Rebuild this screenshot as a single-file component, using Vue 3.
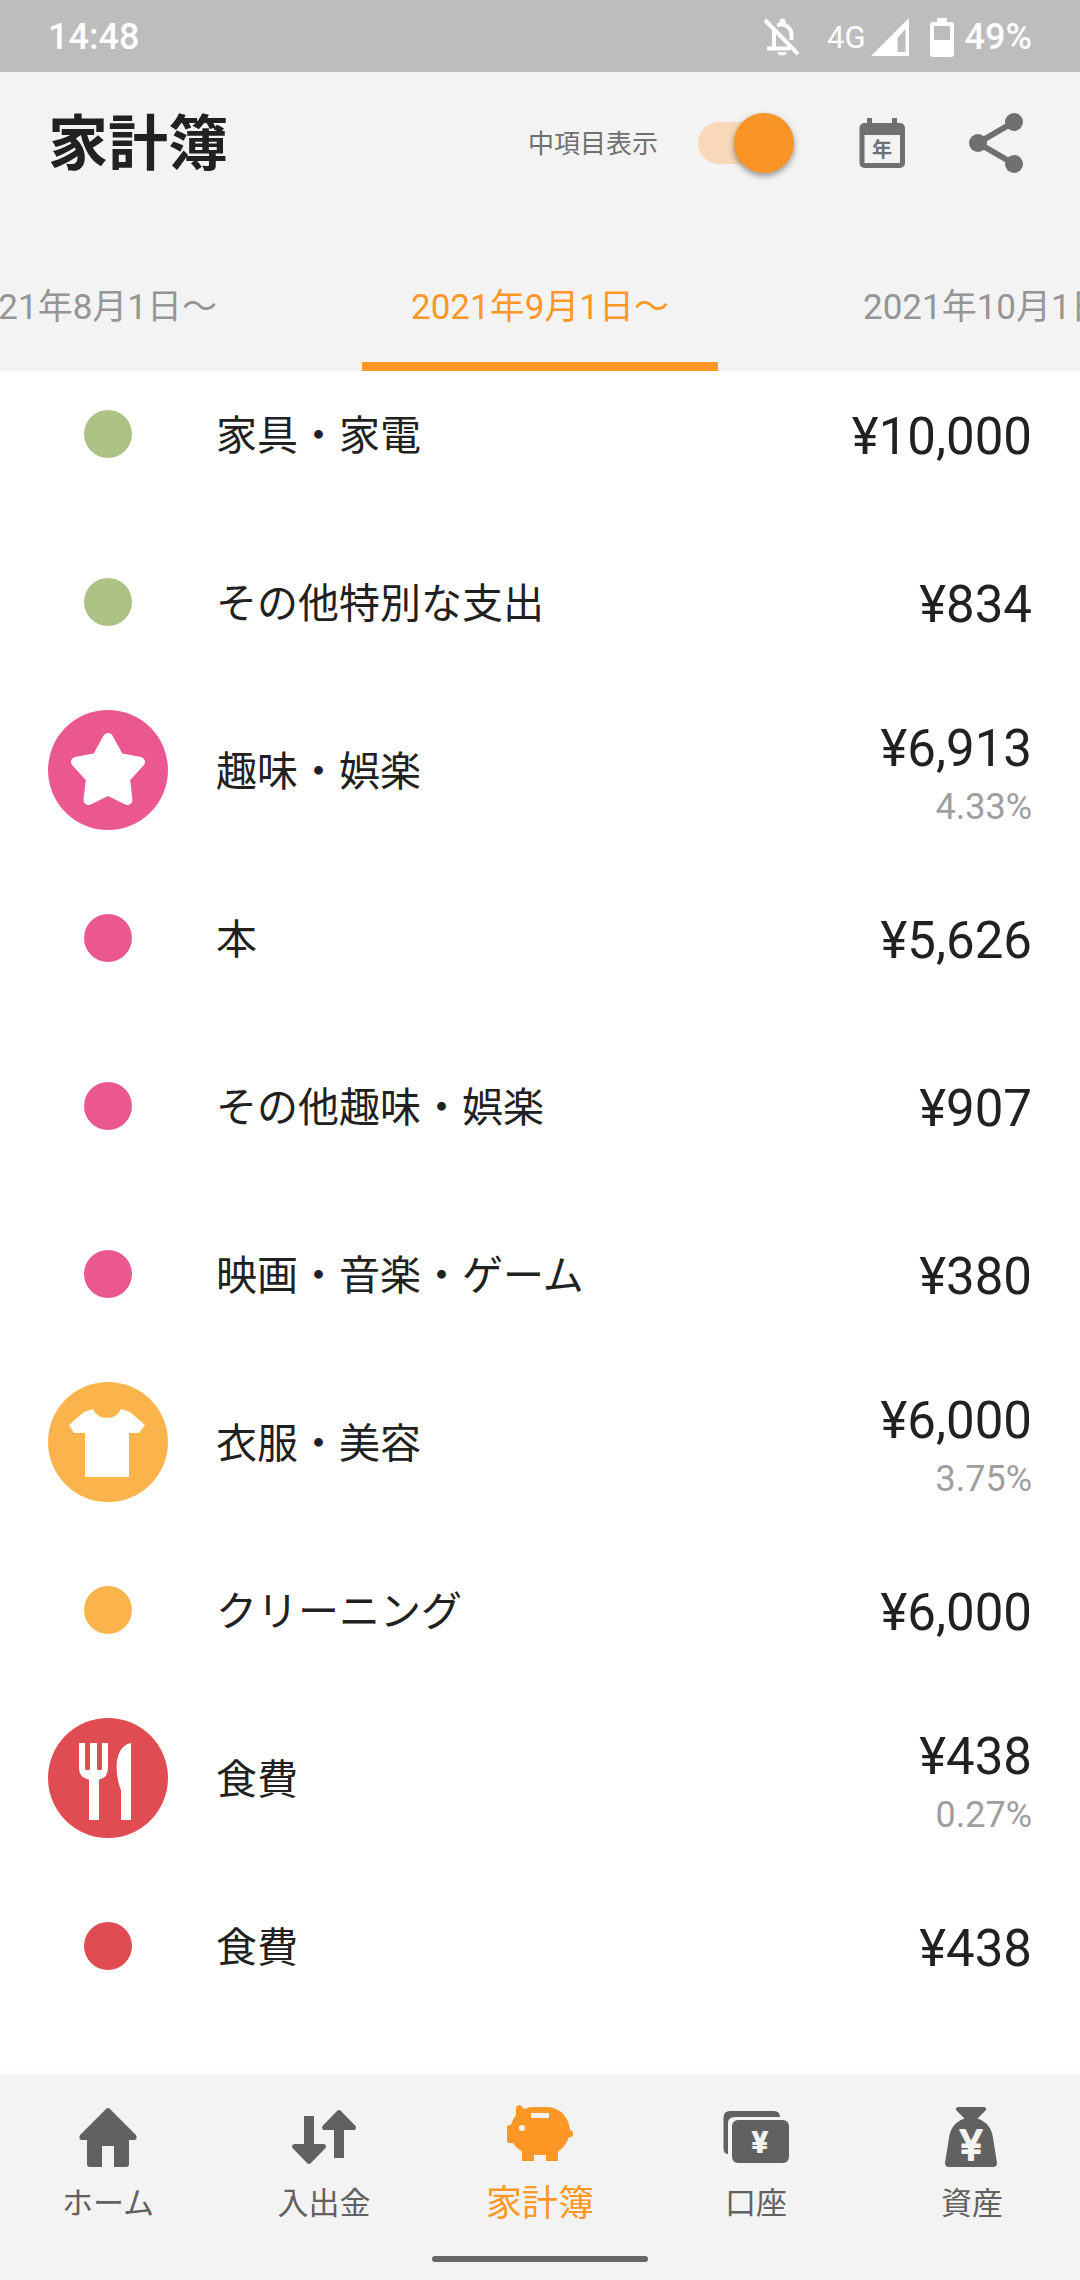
<script setup>
import { ref } from 'vue'

const showSubcategories = ref(true)

const periods = ['2021年8月1日〜', '2021年9月1日〜', '2021年10月1日〜']
const activePeriod = 1

const rows = [
  { label: '家具・家電', amount: '¥10,000', tone: 'green' },
  { label: 'その他特別な支出', amount: '¥834', tone: 'green' },
  { label: '趣味・娯楽', amount: '¥6,913', share: '4.33%', tone: 'pink', icon: 'star' },
  { label: '本', amount: '¥5,626', tone: 'pink' },
  { label: 'その他趣味・娯楽', amount: '¥907', tone: 'pink' },
  { label: '映画・音楽・ゲーム', amount: '¥380', tone: 'pink' },
  { label: '衣服・美容', amount: '¥6,000', share: '3.75%', tone: 'amber', icon: 'shirt' },
  { label: 'クリーニング', amount: '¥6,000', tone: 'amber' },
  { label: '食費', amount: '¥438', share: '0.27%', tone: 'red', icon: 'food' },
  { label: '食費', amount: '¥438', tone: 'red' },
]

const navItems = [
  { id: 'home', label: 'ホーム' },
  { id: 'flow', label: '入出金' },
  { id: 'book', label: '家計簿', active: true },
  { id: 'account', label: '口座' },
  { id: 'assets', label: '資産' },
]
</script>

<template>
  <div class="app">
    <div class="status">
      <span class="clock">14:48</span>
      <svg class="bell" viewBox="0 0 37 38" width="37" height="38" fill="none" stroke="#fff" stroke-width="4">
        <path d="M11 12V30M4 30.500H27" />
        <path d="M14 7.500C23 4 28.500 11 28.500 17V22" />
        <path d="M2 2L35 36" />
        <path d="M16.500 6V3.500a3 3 0 0 1 6 0V6zM14.500 34h9a4.500 3.500 0 0 1-9 0z" fill="#fff" stroke="none" />
      </svg>
      <span class="network">4G</span>
      <svg class="signal" viewBox="0 0 38 38" width="38" height="38">
        <path fill="#fff" fill-rule="evenodd" d="M38 0V38H0zM34.500 11L26.500 20V34H34.500z" />
      </svg>
      <svg class="battery" viewBox="0 0 24 39" width="24" height="39">
        <path fill="#fff" fill-rule="evenodd" d="M7 0h10v4h4a3 3 0 0 1 3 3v29a3 3 0 0 1-3 3H3a3 3 0 0 1-3-3V7a3 3 0 0 1 3-3h4zM4 8v14h16V8z" />
      </svg>
      <span class="level">49%</span>
    </div>

    <header class="header">
      <div class="toolbar">
        <h1 class="title">家計簿</h1>
        <label class="toggle">
          <span class="toggle-text">中項目表示</span>
          <input v-model="showSubcategories" type="checkbox" role="switch" class="switch" />
        </label>
        <button type="button" class="tool calendar" aria-label="年表示">
          <svg viewBox="0 0 72 72" width="72" height="72">
            <path fill="#707070" fill-rule="evenodd" d="M21 11h5v5h20v-5h5v5h3a5 5 0 0 1 5 5v35a5 5 0 0 1-5 5H18.500a5 5 0 0 1-5-5V21a5 5 0 0 1 5-5H21zM18.500 28v28h35.500V28z" />
            <text x="36" y="50" text-anchor="middle" class="year">年</text>
          </svg>
        </button>
        <button type="button" class="tool share" aria-label="共有">
          <svg viewBox="0 0 72 72" width="72" height="72" fill="#707070">
            <path d="M54 15L18 36L54 57" fill="none" stroke="#707070" stroke-width="6" />
            <circle cx="54" cy="15" r="9" />
            <circle cx="18" cy="36" r="9" />
            <circle cx="54" cy="57" r="9" />
          </svg>
        </button>
      </div>
      <nav class="tabs">
        <button
          v-for="(period, i) in periods"
          :key="period"
          type="button"
          class="tab"
          :class="{ active: i === activePeriod }"
        >{{ period }}</button>
      </nav>
    </header>

    <main class="content">
      <ul class="rows">
        <li v-for="(row, i) in rows" :key="i" class="row">
          <div class="marker">
            <span v-if="!row.icon" class="dot" :class="row.tone"></span>
            <span v-else class="badge" :class="row.tone">
              <svg viewBox="0 0 120 120" width="120" height="120" fill="#fff">
                <path
                  v-if="row.icon === 'star'"
                  d="M60 28L71 48L92 52L77 68.500L79.500 90L60 80.500L40.500 90L43 68.500L28 52L49 48z"
                  stroke="#fff"
                  stroke-width="10"
                  stroke-linejoin="round"
                />
                <path
                  v-else-if="row.icon === 'shirt'"
                  d="M45 27C50 39 68 39 73 27L82 30L97 43L91 51H81V95H37V51H26L21 43L36 30z"
                />
                <template v-else>
                  <path d="M31 25h6v26a3 3 0 0 0 5 0V25h7v26a3 3 0 0 0 5 0V25h6v25q0 10-9 11.500V102H41V61.500Q31 60 31 50z" />
                  <path d="M83 25V102H73V72C66 55 66 28 83 25z" />
                </template>
              </svg>
            </span>
          </div>
          <span class="label">{{ row.label }}</span>
          <div class="figures">
            <span class="amount">{{ row.amount }}</span>
            <span v-if="row.share" class="percent">{{ row.share }}</span>
          </div>
        </li>
      </ul>
    </main>

    <footer class="bottom">
      <nav class="nav">
        <a v-for="item in navItems" :key="item.id" href="#" class="nav-item" :class="{ active: item.active }">
          <svg viewBox="0 0 72 72" width="72" height="72" fill="currentColor">
            <path
              v-if="item.id === 'home'"
              d="M34 9q2-2 4 0L64 35q2 5-2 5H57V64q0 3-3 3H42V46H30V67H18q-3 0-3-3V40H10q-4 0-2-5z"
            />
            <path
              v-else-if="item.id === 'flow'"
              d="M16 16H26V44H36q3 1 1.500 4L23 63q-2 2-4 0L4.500 48Q3 45 6 44H16zM46 58V30H36q-3-1-1.500-4L49 11q2-2 4 0L67.500 26Q69 29 66 30H56V58z"
            />
            <path
              v-else-if="item.id === 'book'"
              fill-rule="evenodd"
              d="M12 8q1-4 5-2.500L20 9Q24 7 30 7H42C57 7 65 18 66 30q3 0 3 4t-4 3Q62 46 54 51.500V61H42V55H30V61H18V51.500Q12 48 9 43H5q-2 0-2-2V27q0-2 4-2 1-5 5-10zM27 13v5h18v-5zM21 28a3 3 0 1 0-6 0a3 3 0 0 0 6 0z"
            />
            <template v-else-if="item.id === 'account'">
              <path d="M10 11H54q6 0 6 6H15Q8 17 8 23V54Q3.500 54 3.500 48V18q0-7 6.500-7z" />
              <rect x="12" y="20" width="57" height="43" rx="6" />
              <text x="40" y="53" text-anchor="middle" class="yen">¥</text>
            </template>
            <template v-else>
              <path d="M22 7H48q3 1 2 3L41.500 18.500C52 22 56 30 57 38L61 63q0 4-4 4H13q-4 0-4-4L13 38C14 30 18 22 28.500 18.500L20 10q-1-2 2-3z" />
              <text x="35" y="60" text-anchor="middle" class="yen round">¥</text>
            </template>
          </svg>
          <span>{{ item.label }}</span>
        </a>
      </nav>
      <div class="handle"></div>
    </footer>
  </div>
</template>

<style>
body {
  margin: 0;
  background: #fff;
}
</style>

<style scoped>
.app {
  display: flex;
  flex-direction: column;
  min-height: 100vh;
  overflow: hidden;
  background: #fff;
  color: #212121;
  font-family: Roboto, "Noto Sans CJK JP", sans-serif;
}

.app button {
  padding: 0;
  border: 0;
  background: none;
  font: inherit;
}

.status {
  box-sizing: border-box;
  display: flex;
  align-items: center;
  height: 72px;
  padding: 2px 48px 0;
  background: #bdbdbd;
  color: #fff;
  font-size: 36px;
  font-weight: 500;
}

.clock {
  margin-right: auto;
}

.network {
  margin: 0 5px 0 27px;
  font-size: 31px;
  font-weight: 400;
}

.battery {
  margin: 0 11px 0 21px;
}

.header {
  background: #f3f3f3;
}

.toolbar {
  display: flex;
  align-items: center;
  height: 142px;
  padding: 0 48px;
}

.title {
  margin: 0 auto 0 0;
  padding-top: 4px;
  font-size: 60px;
  line-height: 72px;
  font-weight: 700;
}

.toggle {
  display: flex;
  align-items: center;
  gap: 40px;
  color: #707070;
  font-size: 26px;
}

.toggle-text {
  padding-bottom: 4px;
}

.switch {
  appearance: none;
  position: relative;
  display: flex;
  align-items: center;
  width: 96px;
  height: 60px;
  margin: 0;
}

.switch::before {
  content: "";
  width: 84px;
  height: 42px;
  border-radius: 21px;
  background: #f8d8b8;
}

.switch::after {
  content: "";
  position: absolute;
  left: 0;
  top: 0;
  width: 60px;
  height: 60px;
  border-radius: 50%;
  background: #bdbdbd;
  box-shadow: 0 3px 6px rgba(0, 0, 0, 0.4);
}

.switch:checked::after {
  left: 36px;
  background: #f99426;
}

.tool svg {
  display: block;
}

.calendar {
  margin: 0 42px 0 52px;
}

.year {
  fill: #707070;
  font-size: 20px;
  font-weight: 700;
}

.tabs {
  display: grid;
  grid-template-columns: minmax(0, 1fr) auto minmax(0, 1fr);
  column-gap: 96px;
  height: 130px;
  margin-top: 27px;
  overflow: hidden;
}

.app .tab {
  box-sizing: border-box;
  padding: 3px 49px 0;
  border-bottom: 9px solid transparent;
  color: #959595;
  font-size: 35px;
  white-space: nowrap;
}

.tab:first-child {
  justify-self: end;
}

.tab:last-child {
  justify-self: start;
}

.app .tab.active {
  border-bottom-color: #ff9727;
  color: #ff9727;
}

.content {
  flex: 1;
  overflow: hidden;
}

.rows {
  margin: -21px 0 0;
  padding: 0;
  list-style: none;
}

.row {
  display: flex;
  align-items: center;
  height: 168px;
  padding: 0 48px;
}

.marker {
  display: flex;
  justify-content: center;
  width: 120px;
  margin-right: 48px;
}

.dot {
  width: 48px;
  height: 48px;
  border-radius: 50%;
}

.badge {
  width: 120px;
  height: 120px;
  border-radius: 50%;
}

.green {
  background: #adc285;
}

.pink {
  background: #eb588f;
}

.amber {
  background: #fbb44c;
}

.red {
  background: #df4c52;
}

.label {
  flex: 1;
  padding-top: 4px;
  font-size: 41px;
  line-height: 60px;
}

.figures {
  display: flex;
  flex-direction: column;
  align-items: flex-end;
  padding-top: 5px;
}

.amount {
  font-size: 51px;
  line-height: 68px;
}

.percent {
  color: #9e9e9e;
  font-size: 36px;
  line-height: 48px;
}

.bottom {
  display: flex;
  flex-direction: column;
  align-items: center;
  padding: 25px 0 18px;
  background: #f3f3f3;
  box-shadow: 0 0 6px rgba(0, 0, 0, 0.06);
}

.nav {
  display: flex;
  align-self: stretch;
}

.nav-item {
  display: flex;
  flex: 1;
  flex-direction: column;
  align-items: center;
  gap: 12px;
  color: #616161;
  font-size: 31px;
  line-height: 40px;
  text-decoration: none;
}

.nav-item.active {
  color: #ff9727;
  font-size: 36px;
}

.yen {
  fill: #f3f3f3;
  font-size: 32px;
  font-weight: 900;
}

.round {
  stroke: #f3f3f3;
  stroke-width: 2px;
  stroke-linejoin: round;
  font-size: 42px;
  font-weight: 400;
}

.handle {
  width: 20%;
  height: 6px;
  margin-top: 32px;
  border-radius: 3px;
  background: #666;
}
</style>
